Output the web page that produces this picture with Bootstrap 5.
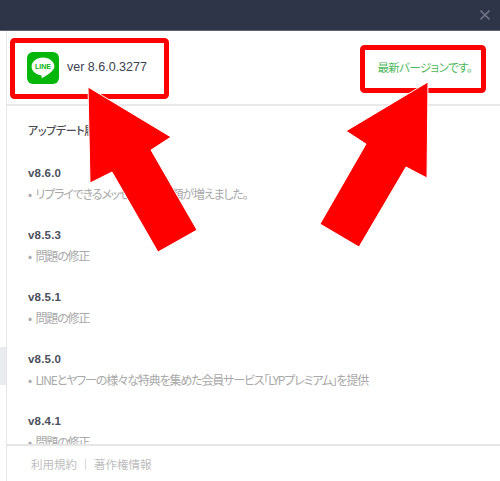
<!DOCTYPE html>
<html lang="ja">
<head>
<meta charset="utf-8">
<title>LINE</title>
<link href="https://cdn.jsdelivr.net/npm/bootstrap@5.3.0/dist/css/bootstrap.min.css" rel="stylesheet">
<style>
html,body{height:481px;overflow:hidden;background:#fff;font-family:"Noto Sans CJK JP","Noto Sans",sans-serif;font-feature-settings:"palt";}
.app-frame{height:481px;position:relative;}
.title-bar{height:31px;background:#2e3549;padding-right:10px;border-bottom:1px solid #5f6470;}
.close-x{width:10px;height:10px;}
.side-rail{width:7px;border-right:1px solid #e6e6e6;}
.side-mark{height:38px;margin-top:316px;background:#e9ebee;width:6px;}
.head-row{height:75px;border-bottom:2px solid #e9e9e9;padding:0 28px 0 20px;}
.ver-text{font-family:"Liberation Sans",Arial,sans-serif;font-size:12.5px;color:#3b4150;margin-left:8px;}
.latest{font-size:11.5px;letter-spacing:-.6px;color:#4cb85c;}
.scroll-body{height:338px;overflow:hidden;padding:15px 0 0 21px;}
.sec-title{font-size:11px;letter-spacing:-.4px;font-weight:500;color:#4a4a52;line-height:18px;margin-bottom:26px;}
.rel-item{height:62px;}
.rel-ver{font-family:"Liberation Sans",Arial,sans-serif;font-size:11.5px;font-weight:700;color:#4a4f5c;line-height:16px;letter-spacing:.2px;}
.rel-note{font-size:12px;letter-spacing:-1.15px;word-spacing:3px;color:#a9a9a9;line-height:18px;margin-top:3.5px;}
.foot-row{height:37px;border-top:2px solid #e6e6e6;padding:2px 0 0 24px;font-size:11.5px;color:#bdbdbd;}
.foot-sep{width:1px;height:11px;background:#d8d8d8;margin:0 8px;}
.overlay{position:absolute;inset:0;width:500px;height:481px;pointer-events:none;}
</style>
</head>
<body>
<div class="app-frame d-flex flex-column">
  <div class="title-bar d-flex align-items-center justify-content-end flex-shrink-0">
    <svg class="close-x" viewBox="0 0 10 10"><path d="M.5.5l9 9M9.5.5l-9 9" stroke="#6d7280" stroke-width="1.6" fill="none"/></svg>
  </div>
  <div class="d-flex flex-grow-1">
    <div class="side-rail flex-shrink-0"><div class="side-mark"></div></div>
    <div class="flex-grow-1 d-flex flex-column">
      <div class="head-row d-flex align-items-center justify-content-between">
        <div class="d-flex align-items-center">
          <svg width="32" height="32" viewBox="0 0 32 32"><rect width="32" height="32" rx="6" fill="#06b60a"/><path d="M16 5.500c-6.300 0-11.400 4-11.400 9 0 4.400 4 8.100 9.500 8.800.8.200.6 1 .4 2-.1.700.4.800 1 .5 3-1.700 11.900-6.700 11.900-11.300 0-5-5.100-9-11.400-9z" fill="#fff"/><text x="16" y="17" text-anchor="middle" font-family="Liberation Sans" font-weight="700" font-size="7" fill="#06b60a">LINE</text></svg>
          <span class="ver-text">ver 8.6.0.3277</span>
        </div>
        <span class="latest">最新バージョンです。</span>
      </div>
      <div class="scroll-body">
        <div class="sec-title">アップデート履歴</div>
        <div class="rel-item"><div class="rel-ver">v8.6.0</div><div class="rel-note">• リプライできるメッセージの種類が増えました。</div></div>
        <div class="rel-item"><div class="rel-ver">v8.5.3</div><div class="rel-note">• 問題の修正</div></div>
        <div class="rel-item"><div class="rel-ver">v8.5.1</div><div class="rel-note">• 問題の修正</div></div>
        <div class="rel-item"><div class="rel-ver">v8.5.0</div><div class="rel-note">• LINEとヤフーの様々な特典を集めた会員サービス「LYPプレミアム」を提供</div></div>
        <div class="rel-item"><div class="rel-ver">v8.4.1</div><div class="rel-note">• 問題の修正</div></div>
      </div>
      <div class="foot-row d-flex align-items-center"><span>利用規約</span><span class="foot-sep"></span><span>著作権情報</span></div>
    </div>
  </div>
  <svg class="overlay" viewBox="0 0 500 481">
    <rect x="12.500" y="40.500" width="154" height="56" rx="2" fill="none" stroke="#f00" stroke-width="5"/>
    <rect x="362.500" y="47.500" width="121" height="43" rx="2" fill="none" stroke="#f00" stroke-width="5"/>
    <path d="M88 87L171 137L151 150L197 230L158 252L112 172L90 183Z" fill="#f00" stroke="#fff" stroke-width="1"/>
    <path d="M428 82L427 178L406 167L359 247L320 224L366 144L346 131Z" fill="#f00" stroke="#fff" stroke-width="1"/>
  </svg>
</div>
<script src="https://cdn.jsdelivr.net/npm/bootstrap@5.3.0/dist/js/bootstrap.bundle.min.js"></script>
</body>
</html>
